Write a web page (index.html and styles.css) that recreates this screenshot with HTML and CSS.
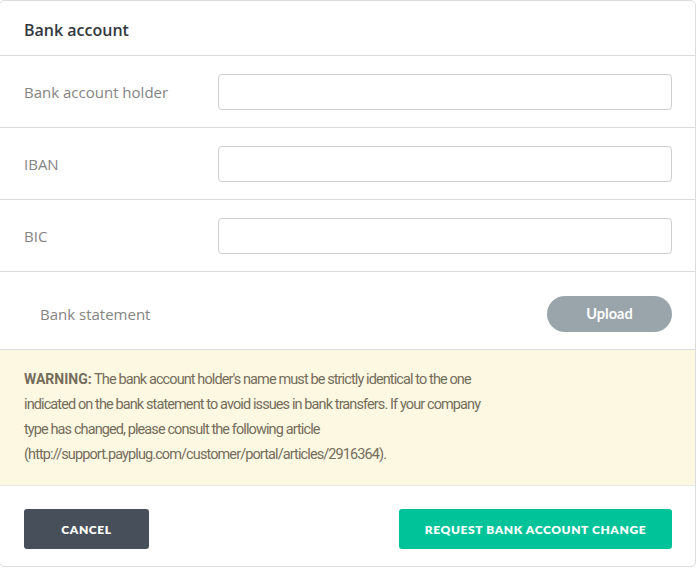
FILE: index.html
```html
<!DOCTYPE html>
<html>
<head>
<meta charset="utf-8">
<link rel="stylesheet" href="styles.css">
</head>
<body>
<div class="card">
  <div class="card-header">Bank account</div>
  <div class="row">
    <label class="label">Bank account holder</label>
    <input class="input" type="text">
  </div>
  <div class="row">
    <label class="label">IBAN</label>
    <input class="input" type="text">
  </div>
  <div class="row">
    <label class="label">BIC</label>
    <input class="input" type="text">
  </div>
  <div class="row row-upload">
    <span class="label label-indent">Bank statement</span>
    <button class="btn-upload">Upload</button>
  </div>
  <div class="warning">
    <p class="warning-text"><strong class="warning-title">WARNING:</strong> The bank account holder's name must be strictly identical to the one indicated on the bank statement to avoid issues in bank transfers. If your company type has changed, please consult the following article (http://support.payplug.com/customer/portal/articles/2916364).</p>
  </div>
  <div class="footer">
    <button class="btn btn-cancel">CANCEL</button>
    <button class="btn btn-primary">REQUEST BANK ACCOUNT CHANGE</button>
  </div>
</div>
</body>
</html>
```
FILE: styles.css
```css
html, body {
  margin: 0;
  padding: 0;
  background: #ffffff;
}
body {
  font-family: "Open Sans", "Liberation Sans", sans-serif;
}
.card {
  width: 697px;
  margin-left: -1px;
  border: 1px solid #dcdcdc;
  border-radius: 5px;
  background: #fff;
  box-sizing: border-box;
  overflow: hidden;
}
.card-header {
  height: 55px;
  padding: 4px 24px 0;
  box-sizing: border-box;
  display: flex;
  align-items: center;
  font-size: 16px;
  font-weight: 600;
  color: #333840;
  border-bottom: 1px solid #dcdcdc;
}
.row {
  height: 72px;
  padding: 0 23px 0 24px;
  display: flex;
  align-items: center;
  border-bottom: 1px solid #dcdcdc;
  box-sizing: border-box;
}
.label {
  width: 194px;
  font-size: 15px;
  color: #848484;
}
.label-indent {
  padding-left: 16px;
  flex: 1;
}
.input {
  flex: 1;
  height: 36px;
  box-sizing: border-box;
  border: 1px solid #cfcfcf;
  border-radius: 4px;
  margin: 0;
  padding: 0 10px;
  font: inherit;
}
.row-upload {
  height: 78px;
  padding-top: 6px;
}
.btn-upload {
  width: 125px;
  height: 36px;
  border: none;
  border-radius: 18px;
  background: #9aa4ab;
  color: #fff;
  font-family: "Lato", sans-serif;
  font-size: 14.5px;
  font-weight: 700;
}
.warning {
  background: #fdf8e1;
  padding: 17px 24px;
  border-bottom: 1px solid #e8e8e8;
  height: 136px;
  box-sizing: border-box;
}
.warning-text {
  margin: 0;
  max-width: 472px;
  font-family: "Roboto", "Liberation Sans", sans-serif;
  font-size: 14.5px;
  letter-spacing: -0.9px;
  line-height: 25px;
  color: #756d5c;
}
.warning-title {
  font-size: 14px;
  font-weight: 700;
  letter-spacing: 0;
}
.footer {
  height: 80px;
  padding: 6px 23px 0 24px;
  display: flex;
  align-items: center;
  justify-content: space-between;
  box-sizing: border-box;
}
.btn {
  height: 40px;
  border: none;
  border-radius: 3px;
  color: #fff;
  font-family: "Lato", sans-serif;
  font-size: 12px;
  font-weight: 800;
  letter-spacing: 0.6px;
}
.btn-cancel {
  width: 125px;
  background: #474f5a;
}
.btn-primary {
  width: 273px;
  background: #00c39a;
}
```
